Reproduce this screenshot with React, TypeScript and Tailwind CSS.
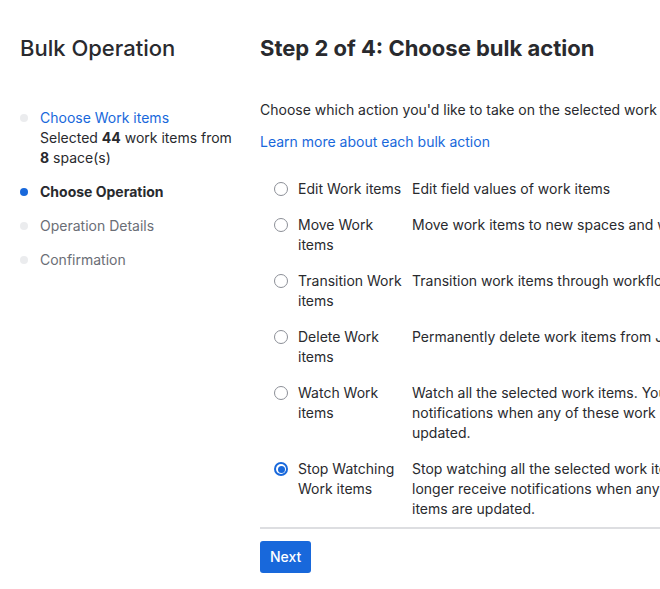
const steps = [
  { label: 'Choose Work items', state: 'done' },
  { label: 'Choose Operation', state: 'current' },
  { label: 'Operation Details', state: 'todo' },
  { label: 'Confirmation', state: 'todo' },
]

const actions = [
  { name: 'Edit Work items', desc: 'Edit field values of work items' },
  { name: 'Move Work items', desc: 'Move work items to new spaces and workflows' },
  { name: 'Transition Work items', desc: 'Transition work items through workflow' },
  { name: 'Delete Work items', desc: 'Permanently delete work items from Jira' },
  {
    name: 'Watch Work items',
    desc: "Watch all the selected work items. You'll receive notifications when any of these work items are updated.",
  },
  {
    name: 'Stop Watching Work items',
    desc: "Stop watching all the selected work items. You'll no longer receive notifications when any of these work items are updated.",
  },
]

function Radio({ checked }: { checked: boolean }) {
  if (checked) {
    return (
      <span className="flex h-[14px] w-[14px] items-center justify-center rounded-full bg-[#1868db]">
        <span className="flex h-[10px] w-[10px] items-center justify-center rounded-full bg-white">
          <span className="h-[7px] w-[7px] rounded-full bg-[#1868db]" />
        </span>
      </span>
    )
  }
  return <span className="block h-[14px] w-[14px] rounded-full border border-[#8c8f97] bg-white" />
}

export default function App() {
  const selected = 5

  return (
    <div className="h-[589px] w-[660px] overflow-hidden bg-white font-['Inter',sans-serif] text-[14px] leading-5 text-[#292a2e]">
      <div className="flex w-[900px]">
        {/* sidebar */}
        <aside className="w-[260px] shrink-0 pl-5 pr-4 pt-[34px]">
          <h2 className="text-[22px] leading-7 font-medium">Bulk Operation</h2>
          <ol className="mt-[46px] flex flex-col gap-[14px]">
            {steps.map((s) => (
              <li key={s.label} className="flex gap-3">
                <span
                  className={
                    'mt-[6px] h-2 w-2 shrink-0 rounded-full ' +
                    (s.state === 'current' ? 'bg-[#1868db]' : 'bg-[#ebecee]')
                  }
                />
                <div>
                  {s.state === 'done' && <div className="text-[#1868db]">{s.label}</div>}
                  {s.state === 'current' && <div className="font-bold">{s.label}</div>}
                  {s.state === 'todo' && <div className="text-[#6b6e76]">{s.label}</div>}
                  {s.state === 'done' && (
                    <div>
                      Selected <b>44</b> work items from <b>8</b> space(s)
                    </div>
                  )}
                </div>
              </li>
            ))}
          </ol>
        </aside>

        {/* main */}
        <main className="w-[600px] shrink-0 pt-[34px]">
          <h1 className="text-[22px] leading-7 font-bold">Step 2 of 4: Choose bulk action</h1>
          <p className="mt-[38px]">Choose which action you'd like to take on the selected work items.</p>
          <a className="mt-3 block text-[#1868db]" href="#">
            Learn more about each bulk action
          </a>

          <div className="mt-[27px] border-b-2 border-[#dddee1] pb-2 pl-[14px]">
            <div className="flex flex-col gap-4">
              {actions.map((a, i) => (
                <div key={a.name} className="flex">
                  <div className="w-6 shrink-0 pt-[3px]">
                    <Radio checked={i === selected} />
                  </div>
                  <div className="w-[114px] shrink-0">{a.name}</div>
                  <div className="w-[360px] shrink-0">{a.desc}</div>
                </div>
              ))}
            </div>
          </div>

          <button className="mt-3 rounded-[3px] bg-[#1868db] px-[10px] py-[6px] font-medium text-white">
            Next
          </button>
        </main>
      </div>
    </div>
  )
}
